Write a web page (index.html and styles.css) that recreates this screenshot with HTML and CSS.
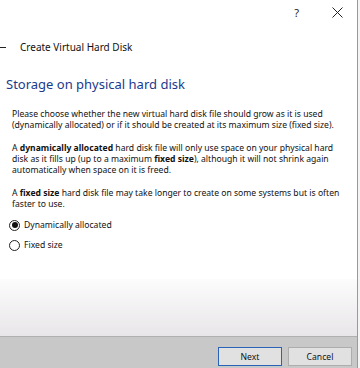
FILE: index.html
```html
<!DOCTYPE html>
<html lang="en">
<head>
    <meta charset="UTF-8">
    <meta name="viewport" content="width=device-width, initial-scale=1.0">
    <title>Create Virtual Hard Disk</title>
    <link rel="stylesheet" href="styles.css">
</head>
<body>

    <div class="window">
        <div class="titlebar">
            <span class="help">?</span>
            <span class="close">
                <svg width="11" height="11" viewBox="0 0 11 11"><path d="M0.5 0.5 L10.5 10.5 M10.5 0.5 L0.5 10.5" stroke="#222" stroke-width="1"/></svg>
            </span>
        </div>

        <div class="nav">
            <span class="back"></span>
            <span class="nav-title">Create Virtual Hard Disk</span>
        </div>

        <div class="content">
            <h1>Storage on physical hard disk</h1>
            <p>Please choose whether the new virtual hard disk file should grow as it is used (dynamically allocated) or if it should be created at its maximum size (fixed size).</p>
            <p>A <b>dynamically allocated</b> hard disk file will only use space on your physical hard disk as it fills up (up to a maximum <b>fixed size</b>), although it will not shrink again automatically when space on it is freed.</p>
            <p>A <b>fixed size</b> hard disk file may take longer to create on some systems but is often faster to use.</p>

            <div class="options">
                <label class="radio"><span class="dot checked"></span>Dynamically allocated</label>
                <label class="radio"><span class="dot"></span>Fixed size</label>
            </div>
        </div>

        <div class="fade"></div>
        <div class="buttons">
            <button class="btn default">Next</button>
            <button class="btn">Cancel</button>
        </div>
    </div>

</body>
</html>
```

FILE: styles.css
```css
body {
    margin: 0;
    padding: 0;
    font-family: 'Noto Sans', 'DejaVu Sans', sans-serif;
    background-color: #f4f4f4;
    color: #111;
}
.window {
    width: 357px;
    height: 368px;
    background-color: #ffffff;
    border-right: 1px solid #9a9a9a;
    display: flex;
    flex-direction: column;
    overflow: hidden;
}
.titlebar {
    height: 24px;
    display: flex;
    justify-content: flex-end;
    align-items: center;
    padding-right: 14px;
}
.help {
    font-size: 11px;
    color: #222;
    margin-right: 33px;
}
.close {
    display: flex;
}
.nav {
    height: 16px;
    display: flex;
    align-items: center;
    margin-top: 15px;
}
.back {
    width: 6px;
    height: 1px;
    background-color: #222;
    margin-right: 14px;
}
.nav-title {
    font-size: 10px;
    color: #111;
}
.content {
    padding: 0 12px;
    flex: 1;
}
h1 {
    font-weight: normal;
    font-size: 13px;
    color: #1b3a8c;
    margin: 20px 0 16px -6px;
}
p {
    font-size: 8.6px;
    line-height: 11px;
    margin: 0 0 12px 0;
}
.options {
    display: flex;
    flex-direction: column;
    gap: 8px;
    margin-top: -3px;
}
.radio {
    display: flex;
    align-items: center;
    font-size: 8.6px;
    margin-left: -3px;
}
.dot {
    width: 9px;
    height: 9px;
    border: 1px solid #222;
    border-radius: 50%;
    margin-right: 4px;
    display: flex;
    align-items: center;
    justify-content: center;
}
.dot.checked::after {
    content: '';
    width: 6px;
    height: 6px;
    border-radius: 50%;
    background-color: #111;
}
.fade {
    height: 57px;
    background: linear-gradient(#fdfcfd, #e8e6e8);
}
.buttons {
    height: 31px;
    background-color: #c8c8c8;
    border-top: 1px solid #b0b0b0;
    display: flex;
    justify-content: flex-end;
    align-items: center;
    gap: 6px;
    padding-right: 5px;
}
.btn {
    width: 64px;
    height: 19px;
    font-family: inherit;
    font-size: 8.6px;
    background-color: #e1e1e1;
    border: 1px solid #adadad;
    color: #111;
    padding: 0;
    margin-top: 8px;
}
.btn.default {
    border: 1px solid #2a62b8;
}
```
